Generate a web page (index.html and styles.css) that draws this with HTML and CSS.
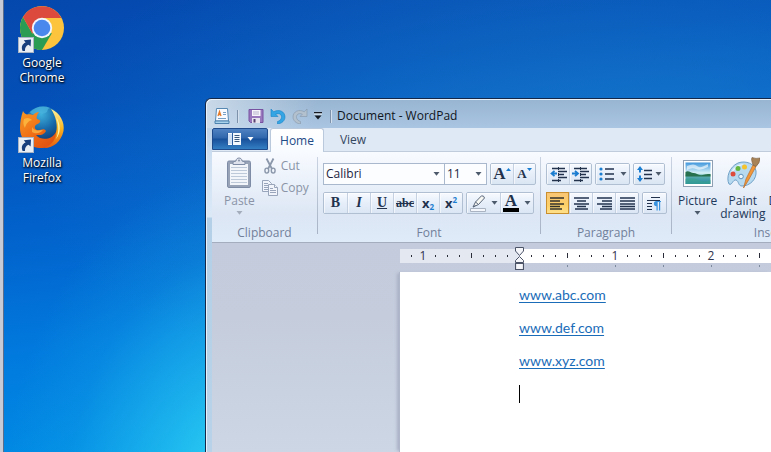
FILE: index.html
```html
<!DOCTYPE html>
<html lang="en">
<head>
<meta charset="utf-8">
<title>Document - WordPad</title>
<link rel="stylesheet" href="styles.css">
</head>
<body>
<svg class="defs" width="0" height="0" aria-hidden="true">
  <defs>
    <symbol id="shortcut" viewBox="0 0 16 16">
      <rect x=".5" y=".5" width="15" height="15" fill="#e9eef5" stroke="#a9b4c4"/>
      <path d="M4.600 14C3 10.500 4 7 7.600 5.600L5.800 3.300L13 2.400L12.600 9.600L10.600 7.700C8.200 8.500 6.700 10.500 7 14Z" fill="#173f7d"/>
    </symbol>
    <symbol id="caret" viewBox="0 0 7 4"><path d="M.5 0H6.500L3.500 3.800Z" fill="currentColor"/></symbol>
    <symbol id="ticks" viewBox="0 0 84 14">
      <path d="M6.500 6v2M18.500 6v2M30.500 6v2M42.500 4v5M54.500 6v2M66.500 6v2M78.500 6v2" stroke="#2a2c38"/>
    </symbol>
  </defs>
</svg>

<main class="desktop">
  <nav class="shortcuts" aria-label="Desktop">
    <a class="shortcut" href="#chrome">
      <svg class="shortcut-icon" viewBox="0 0 48 48" aria-hidden="true">
        <circle cx="24" cy="22" r="22" fill="#fcc43c"/>
        <path d="M24 22L14.300 27.600L4.950 11A22 22 0 0 0 20.200 43.700L33.700 27.600Z" fill="#2a9c54"/>
        <path d="M20.200 43.700A22 22 0 0 0 24 44L33.700 27.600L24 24Z" fill="#2a9c54"/>
        <path d="M4.950 11A22 22 0 0 1 43.400 12H24L14.300 27.600Z" fill="#db4a3d"/>
        <circle cx="24" cy="22" r="10.200" fill="#f3f6fb"/>
        <circle cx="24" cy="22" r="8.300" fill="#4a88ee"/>
        <use href="#shortcut" x="0" y="31" width="16" height="16"/>
      </svg>
      <span>Google<br>Chrome</span>
    </a>
    <a class="shortcut" href="#firefox">
      <svg class="shortcut-icon" viewBox="0 0 48 48" aria-hidden="true">
        <defs>
          <radialGradient id="globe" cx=".45" cy=".2" r=".8"><stop offset="0" stop-color="#3fb0dc"/><stop offset=".5" stop-color="#1768a9"/><stop offset="1" stop-color="#0e2d63"/></radialGradient>
          <linearGradient id="tail" x1="0" y1="0" x2="0" y2="1"><stop offset="0" stop-color="#fdf3a0"/><stop offset=".5" stop-color="#fbb51f"/><stop offset="1" stop-color="#e45a12"/></linearGradient>
          <linearGradient id="fox" x1="0" y1="0" x2="1" y2="1"><stop offset="0" stop-color="#f79a24"/><stop offset=".5" stop-color="#ee6a15"/><stop offset="1" stop-color="#d84410"/></linearGradient>
        </defs>
        <circle cx="25" cy="20" r="19.500" fill="url(#globe)"/>
        <path d="M12 6C17 1 25 -1 32 2C28 3 31 6 27 7C24 9 21 6 18 8C15 9 13 8 12 6Z" fill="#4bb5de" opacity=".7"/>
        <path d="M5 5C6 7 7 8 9 8.500C11 8 13 8 15 9C17 7 19 6 21 6C19 9 18 11 19 13C21 14 23 14 22 16C21 18 18 18 17 20C16 23 19 25 22 24C25 23 27 23 28 25C25 30 21 29 18 29C23 35 34 34 38 26C41 20 40 14 38 10C43 15 44 20 44 25C42 36 34 42 24 42C11 42 2 34 2 22C2 16 3 11 5 5Z" fill="url(#fox)"/>
        <path d="M33 3C42 7 47 16 45.500 25C43 36 35 42 26 42C34 39 38 33 38 27C40 20 38 10 33 3Z" fill="url(#tail)"/>
        <path d="M38 11C43 18 43 27 38 33C41 26 41 19 38 11Z" fill="#fff6a8"/>
        <path d="M6 13C9 11 12 12 14 14C10 15 8 18 7 22C5 19 5 16 6 13Z" fill="#fbb13c"/>
        <path d="M14 21C17 26 21 24 25 24C22 28 17 28 14 26Z" fill="#f9a63c"/>
        <use href="#shortcut" x="0" y="31" width="16" height="16"/>
      </svg>
      <span>Mozilla<br>Firefox</span>
    </a>
  </nav>

  <section class="window" aria-label="Document - WordPad">
    <header class="titlebar">
      <svg width="16" height="16" viewBox="0 0 16 16" aria-hidden="true">
        <path d="M2.500 .5h11l1 12.500h-13z" fill="#f8fbff" stroke="#5688b2"/>
        <path d="M1 13h14v2.500H1z" fill="#a9d2ec" stroke="#4d82ae"/>
        <path d="M4 8L5.500 3.500L7 8M4.500 6.500h2" fill="none" stroke="#e47b2a" stroke-width="1.300"/>
        <path d="M9 4.500h3M9 6.500h3M4 10.500h8" stroke="#78a0c4"/>
      </svg>
      <span class="title-sep"></span>
      <button class="tool" type="button" aria-label="Save">
        <svg width="16" height="16" viewBox="0 0 16 16">
          <path d="M1 1.500h14v13H2.500L1 13z" fill="#9a78bd" stroke="#7652a0"/>
          <path d="M4 2h8.500v6H4z" fill="#f7f5fb"/><path d="M5 4h6M5 6h6" stroke="#b9b1cc"/>
          <path d="M4 10h8v5H4z" fill="#e6e3ee"/><path d="M5.500 11h2v3.500h-2z" fill="#574273"/>
        </svg>
      </button>
      <button class="tool" type="button" aria-label="Undo">
        <svg width="16" height="16" viewBox="0 0 16 16">
          <path d="M1 1v7.500h7L5.700 6.200C9.500 4.500 12 7 11.500 9.500C11.300 11.500 9.500 13 7.500 13.500V16C12 15.500 15 12.500 15 9C15 3.500 9 .7 3.700 3.800Z" fill="#35a5e4" stroke="#1a83c7" stroke-width=".6"/>
        </svg>
      </button>
      <button class="tool" type="button" aria-label="Redo" disabled>
        <svg width="16" height="16" viewBox="0 0 16 16">
          <path d="M15 1v7.500H8L10.300 6.200C6.500 4.500 4 7 4.500 9.500C4.700 11.500 6.500 13 8.500 13.500V16C4 15.500 1 12.500 1 9C1 3.500 7 .7 12.300 3.800Z" fill="#b3c0cd" stroke="#8b9db0" stroke-width=".7"/>
        </svg>
      </button>
      <button class="tool tool-more" type="button" aria-label="Customize Quick Access Toolbar">
        <svg width="8" height="8" viewBox="0 0 8 8"><path d="M0 0h8v1.600H0zM.5 3.500h7L4 7.500z" fill="#151a22"/><path d="M0 2h8" stroke="#f4f8fc"/></svg>
      </button>
      <span class="title-sep"></span>
      <h1 class="title">Document - WordPad</h1>
    </header>

    <div class="client">
      <nav class="tabs" aria-label="Ribbon tabs">
        <button class="app-button" type="button" aria-label="WordPad menu">
          <svg width="14" height="12" viewBox="0 0 14 12"><path d="M0 0h14v12H0z" fill="#f3f8ff"/><path d="M0 0h1v12H0zM5 0h1v12H5z" fill="#2a5c9f"/><path d="M1 1h4v10H1z" fill="#cfe0f5"/><path d="M7.500 2.500h5M7.500 4.500h5M7.500 6.500h5M7.500 8.500h5" stroke="#39597f"/></svg>
          <svg class="caret" width="7" height="4"><use href="#caret"/></svg>
        </button>
        <button class="tab tab-active" type="button">Home</button>
        <button class="tab" type="button">View</button>
      </nav>

      <div class="ribbon">
        <section class="group group-clipboard">
          <div class="group-body">
            <button class="big-button" type="button" disabled>
              <svg width="26" height="32" viewBox="0 0 26 32">
                <rect x="1.500" y="4" width="23" height="26.500" rx="1.500" fill="#98a3b8" stroke="#7f8ca5"/>
                <path d="M4 7h18v21H4z" fill="#f2f5fa"/>
                <path d="M5 10.500h16M5 13.500h16M5 16.500h16M5 19.500h16M5 22.500h16M5 25.500h16" stroke="#bdc8d9"/>
                <path d="M7 7.500V5l3-1c0-4 6-4 6 0l3 1v2.500z" fill="#dde2ec" stroke="#7f8ca5"/>
                <circle cx="13" cy="3.500" r="1" fill="#8591a8"/>
              </svg>
              <span>Paste</span>
              <svg class="caret" width="7" height="4"><use href="#caret"/></svg>
            </button>
            <div class="stack">
              <button class="small-button" type="button" disabled>
                <svg width="16" height="16" viewBox="0 0 16 16" fill="none" stroke="#8b97ab">
                  <path d="M4.500 .5L10 11M11.500 .5L6 11" stroke-width="1.800"/>
                  <ellipse cx="4.800" cy="12.600" rx="1.900" ry="2.500" stroke-width="1.400"/><ellipse cx="11.200" cy="12.600" rx="1.900" ry="2.500" stroke-width="1.400"/>
                </svg>
                <span>Cut</span>
              </button>
              <button class="small-button" type="button" disabled>
                <svg width="16" height="16" viewBox="0 0 16 16" fill="#f1f5fb" stroke="#98a5ba">
                  <path d="M.5 .5h6l3 3v8h-9z"/><path d="M2 3.500h4M2 5.500h5M2 7.500h5M2 9.500h5"/>
                  <path d="M6.500 4.500h6l3 3v8h-9z"/><path d="M12.500 4.500v3h3M8 8.500h3M8 10.500h6M8 12.500h6"/>
                </svg>
                <span>Copy</span>
              </button>
            </div>
          </div>
          <h2 class="group-label">Clipboard</h2>
        </section>
        <span class="group-sep"></span>

        <section class="group group-font">
          <div class="group-body rows">
            <div class="row">
              <div class="combos">
                <label class="combo combo-family"><select aria-label="Font family"><option>Calibri</option></select><svg class="caret" width="7" height="4"><use href="#caret"/></svg></label>
                <label class="combo combo-size"><select aria-label="Font size"><option>11</option></select><svg class="caret" width="7" height="4"><use href="#caret"/></svg></label>
              </div>
              <div class="buttons pair">
                <button type="button" aria-label="Grow font"><span class="glyph glyph-grow">A</span><svg class="mark" width="5" height="3" viewBox="0 0 5 3"><path d="M0 3L2.500 0L5 3z" fill="#1b7dd0"/></svg></button>
                <button type="button" aria-label="Shrink font"><span class="glyph glyph-shrink">A</span><svg class="mark" width="5" height="3" viewBox="0 0 5 3"><path d="M0 0h5L2.500 3z" fill="#1b7dd0"/></svg></button>
              </div>
            </div>
            <div class="row">
              <div class="buttons">
                <button type="button" aria-label="Bold"><b class="glyph">B</b></button>
                <button type="button" aria-label="Italic"><i class="glyph glyph-italic">I</i></button>
                <button type="button" aria-label="Underline"><u class="glyph">U</u></button>
                <button type="button" aria-label="Strikethrough"><s class="glyph glyph-strike">abc</s></button>
                <button type="button" aria-label="Subscript"><span class="glyph glyph-script">x<sub>2</sub></span></button>
                <button type="button" aria-label="Superscript"><span class="glyph glyph-script">x<sup>2</sup></span></button>
              </div>
              <div class="buttons wide">
                <button type="button" aria-label="Text highlight color">
                  <svg width="16" height="17" viewBox="0 0 16 17"><path d="M3 12L5.500 7L11.500 .8Q14 .5 14.500 3L8.500 9.500Z" fill="#f8f8f4" stroke="#596678"/><path d="M5.500 7L8.500 9.500M3 12l2.500-1.500" stroke="#596678"/><path d="M.5 13.500h15v3H.5z" fill="#f4f7fb" stroke="#a9b3c1"/></svg>
                  <svg class="caret" width="7" height="4"><use href="#caret"/></svg>
                </button>
                <button type="button" aria-label="Text color">
                  <span class="color-glyph">A</span>
                  <svg class="caret" width="7" height="4"><use href="#caret"/></svg>
                </button>
              </div>
            </div>
          </div>
          <h2 class="group-label">Font</h2>
        </section>
        <span class="group-sep"></span>

        <section class="group group-paragraph">
          <div class="group-body rows">
            <div class="row">
              <div class="buttons pair">
                <button type="button" aria-label="Decrease indent"><svg width="17" height="15" viewBox="0 0 17 15"><path d="M2 1.500h13M8 4.500h9M8 7.500h6M8 10.500h9M2 13.500h9" stroke="#22324d" stroke-width="1.400"/><path d="M7 6.500H2.500M4.500 3.800L1.500 6.500L4.500 9.200" fill="none" stroke="#1b7dd0" stroke-width="1.800"/><path d="M8.500 0v15" stroke="#22324d" stroke-dasharray="1 1"/></svg></button>
                <button type="button" aria-label="Increase indent"><svg width="17" height="15" viewBox="0 0 17 15"><path d="M2 1.500h13M8 4.500h9M8 7.500h6M8 10.500h9M2 13.500h9" stroke="#22324d" stroke-width="1.400"/><path d="M0 6.500H5M3 3.800L6 6.500L3 9.200" fill="none" stroke="#1b7dd0" stroke-width="1.800"/><path d="M8.500 0v15" stroke="#22324d" stroke-dasharray="1 1"/></svg></button>
              </div>
              <div class="buttons drop">
                <button type="button" aria-label="Start a list"><svg width="16" height="14" viewBox="0 0 16 14"><path d="M6 2h9M6 7h9M6 12h9" stroke="#22324d" stroke-width="1.300"/><g fill="#1b7dd0"><circle cx="2" cy="2" r="1.600"/><circle cx="2" cy="7" r="1.600"/><circle cx="2" cy="12" r="1.600"/></g></svg><svg class="caret" width="7" height="4"><use href="#caret"/></svg></button>
              </div>
              <div class="buttons drop-narrow">
                <button type="button" aria-label="Line spacing"><svg width="15" height="16" viewBox="0 0 15 16"><path d="M7 4.500h8M7 8.500h8M7 12.500h8" stroke="#22324d" stroke-width="1.300"/><path d="M3 0L6 4H4v2.500H2V4H0zM3 16L6 12H4V9.500H2V12H0z" fill="#1b7dd0"/></svg><svg class="caret" width="7" height="4"><use href="#caret"/></svg></button>
              </div>
            </div>
            <div class="row">
              <div class="buttons">
                <button class="pressed" type="button" aria-label="Align left"><svg width="15" height="13" viewBox="0 0 15 13"><path d="M0 1h14M0 4h10M0 7h14M0 9.500h10M0 12h12" stroke="#33322c" stroke-width="1.300"/></svg></button>
                <button type="button" aria-label="Center"><svg width="15" height="13" viewBox="0 0 15 13"><path d="M0 1h15M3 4h9M0 7h15M3 9.500h9M1 12h13" stroke="#22324d" stroke-width="1.300"/></svg></button>
                <button type="button" aria-label="Align right"><svg width="15" height="13" viewBox="0 0 15 13"><path d="M0 1h15M5 4h10M0 7h15M5 9.500h10M3 12h12" stroke="#22324d" stroke-width="1.300"/></svg></button>
                <button type="button" aria-label="Justify"><svg width="15" height="13" viewBox="0 0 15 13"><path d="M0 1h15M0 4h15M0 7h15M0 9.500h15M0 12h15" stroke="#22324d" stroke-width="1.300"/></svg></button>
              </div>
              <div class="buttons">
                <button type="button" aria-label="Paragraph"><svg width="15" height="15" viewBox="0 0 15 15"><path d="M4 1.500h9M0 4.500h13M0 7.500h5M0 10.500h5M0 13.500h5" stroke="#22324d" stroke-width="1.200"/><path d="M14 5H9.500a2.600 2.600 0 0 0 0 5.200V14.500h1.200V6h1.300v8.500h1.200V6H14z" fill="#3993df"/></svg></button>
              </div>
            </div>
          </div>
          <h2 class="group-label">Paragraph</h2>
        </section>
        <span class="group-sep"></span>

        <section class="group group-insert">
          <div class="group-body">
            <button class="big-button" type="button">
              <svg width="30" height="32" viewBox="0 0 30 32">
                <defs>
                  <linearGradient id="sky" x1="0" y1="0" x2="0" y2="1"><stop offset="0" stop-color="#3f96dc"/><stop offset=".5" stop-color="#d8f2f7"/><stop offset=".6" stop-color="#5fb0ac"/><stop offset="1" stop-color="#2586a8"/></linearGradient>
                </defs>
                <rect x=".5" y="3.500" width="29" height="26" fill="#fff" stroke="#8fa0b5"/>
                <path d="M2.500 5.500h25v21.500h-25z" fill="url(#sky)"/>
                <path d="M4 9q7-3 10 0t11-2v3q-8 4-12 2T4 13z" fill="#fff" opacity=".6"/>
                <path d="M2.500 15c3-2 5 1 8 1s5 3 9 2s5-1 8-1v2.500h-25z" fill="#28714e"/>
                <path d="M2.500 22q8-2 13 1t12 0v4h-25z" fill="#3aa58b" opacity=".6"/>
              </svg>
              <span>Picture</span>
              <svg class="caret" width="7" height="4"><use href="#caret"/></svg>
            </button>
            <button class="big-button" type="button">
              <svg width="34" height="32" viewBox="0 0 34 32">
                <path d="M3 27C0 21 3 10 12 6C20 3 29 7 30 14C31 22 24 29 16 29C12 29 13 24 10 23C7 22 6 29 3 27Z" fill="#b7daf1" stroke="#6f9fc5"/>
                <path d="M4 20C5 11 11 7 18 7C12 10 7 13 4 20Z" fill="#e5f4fd"/>
                <circle cx="7" cy="17" r="2.500" fill="#dd4b3b"/><circle cx="12" cy="11.500" r="2.500" fill="#65b63f"/><circle cx="18.500" cy="10" r="2.500" fill="#f4c32c"/><circle cx="15" cy="19.500" r="2.300" fill="#eff8fd" stroke="#6192bd"/>
                <path d="M17.500 31L20 22L27 8L30 9.500L22 24Z" fill="#f2983a" stroke="#b66b29" stroke-width=".7"/>
                <path d="M27 8C26 5 25 2 26 .5Q30 2 34 1Q34 6 30 9.500Z" fill="#a98358" stroke="#76593c" stroke-width=".6"/>
              </svg>
              <span>Paint<br>drawing</span>
            </button>
            <button class="big-button" type="button">
              <svg width="32" height="32" viewBox="0 0 32 32"><path d="M4.500 5.500h23v22h-23z" fill="#fff" stroke="#8fa0b5"/><path d="M5 6h22v5H5z" fill="#4c8fd0"/></svg>
              <span>Date and<br>time</span>
            </button>
          </div>
          <h2 class="group-label">Insert</h2>
        </section>
      </div>

      <div class="workspace">
        <div class="ruler" aria-hidden="true">
          <div class="ruler-margin">
            <svg width="12" height="14" viewBox="0 0 12 14"><path d="M6.500 6v2" stroke="#2a2c38"/></svg>
            <span class="ruler-number">1</span>
            <svg width="84" height="14"><use href="#ticks"/></svg>
            <svg class="indent" width="9" height="23" viewBox="0 0 9 23" fill="#f5f7fb" stroke="#4c5468">
              <path d="M.5 .5h8v3.500L4.500 8.500L.5 4z"/><path d="M4.500 9.500L8.500 13.500V15.500h-8V13.500z"/><path d="M.5 16.500h8v6h-8z" stroke-width="1.200"/>
            </svg>
          </div>
          <div class="ruler-page">
            <svg width="84" height="14"><use href="#ticks"/></svg>
            <span class="ruler-number">1</span>
            <svg width="84" height="14"><use href="#ticks"/></svg>
            <span class="ruler-number">2</span>
            <svg width="84" height="14"><use href="#ticks"/></svg>
          </div>
        </div>
        <article class="page">
          <p><a href="#abc">www.abc.com</a></p>
          <p><a href="#def">www.def.com</a></p>
          <p><a href="#xyz">www.xyz.com</a></p>
          <p><span class="text-cursor"></span></p>
        </article>
      </div>
    </div>
  </section>
</main>
</body>
</html>
```
FILE: styles.css
```css
* { box-sizing: border-box; }

body {
  margin: 0;
  font: 12px/16px "Open Sans", "Noto Sans", sans-serif;
  color: #1e395b;
}

svg { display: block; flex: none; }
.defs { position: absolute; }

button {
  margin: 0;
  padding: 0;
  border: 0;
  background: none;
  font: inherit;
  color: inherit;
}

h1, h2, p { margin: 0; font: inherit; }

.caret { color: #4d5a6c; }

/* Desktop */
.desktop {
  position: relative;
  height: 100vh;
  overflow: hidden;
  border-left: 3px solid #c6c9d6;
  background:
    radial-gradient(ellipse 260px 340px at 260px 500px, rgba(60, 230, 248, .95) 0%, rgba(50, 215, 245, .55) 40%, rgba(30, 180, 235, .2) 75%, rgba(0, 140, 230, 0) 100%),
    radial-gradient(ellipse 600px 260px at 620px 160px, rgba(30, 130, 205, .7), rgba(20, 110, 200, 0)),
    linear-gradient(172deg, #0548ad 0%, #0350b8 20%, #0262cc 42%, #017ade 64%, #0099ea 100%);
  box-shadow: inset 1px 0 #5c6d8c;
}

.shortcuts {
  display: flex;
  flex-direction: column;
  align-items: flex-start;
  gap: 21px;
  padding: 6px 0 0 1px;
}

.shortcut {
  display: flex;
  flex-direction: column;
  align-items: center;
  width: 76px;
  line-height: 15px;
  text-align: center;
  text-decoration: none;
  color: #fff;
  text-shadow: 1px 1px 2px #000, 0 1px 2px #001a40;
}

.shortcut-icon { width: 48px; height: 48px; margin-bottom: 1px; }

/* Window frame */
.window {
  position: absolute;
  inset: 98px 0 0 202px;
  display: flex;
  flex-direction: column;
  padding: 1px 0 0 6px;
  overflow: hidden;
  border: solid #14284a;
  border-width: 1px 0 0 1px;
  border-radius: 6px 0 0 0;
  background:
    linear-gradient(100deg, rgba(222, 232, 242, .7) 0, rgba(222, 232, 242, 0) 110px) 0 0 / 100% 29px no-repeat,
    linear-gradient(#97b4d0, #a9c5e2) 0 0 / 100% 29px no-repeat,
    linear-gradient(#a9c5e2 0, #cfe0f2 60px, #dbe9f7 118px, #b3d0e8 119px, #b8d3e9 100%);
  box-shadow: inset 1px 1px #e9f2fa;
}

.titlebar {
  display: flex;
  align-items: center;
  height: 28px;
  padding: 4px 0 0 2px;
}

.titlebar .title-sep { margin: 0 9px 0 7px; }

.title-sep {
  width: 2px;
  height: 13px;
  border-left: 1px solid #7e93ab;
  background: #d4e0ed;
}

.tool { margin-right: 6px; }
.titlebar .tool-more { margin-right: 1px; }
.title-sep + .title { margin-left: -4px; }
.title { color: #10151d; }

.client {
  display: flex;
  flex: 1;
  flex-direction: column;
  min-height: 0;
}

/* Tabs */
.tabs {
  display: flex;
  flex: none;
  gap: 2px;
  height: 24px;
  background: #dfe8f5;
  border-bottom: 1px solid #c0cbdc;
}

.app-button {
  display: flex;
  align-items: center;
  justify-content: center;
  gap: 6px;
  width: 56px;
  height: 22px;
  border: 1px solid #1f4b8c;
  border-radius: 2px 2px 0 0;
  background: linear-gradient(#4f82c2, #2f66ac 45%, #18509a 50%, #337fc4);
}
.app-button .caret { color: #fff; }

.tab {
  width: 54px;
  height: 24px;
  color: #33475f;
}

.tab-active {
  border: 1px solid #bac9db;
  border-bottom: 0;
  border-radius: 3px 3px 0 0;
  background: linear-gradient(#fff, #f8fbff);
  color: #1e4a86;
}

/* Ribbon */
.ribbon {
  display: flex;
  flex: none;
  padding-top: 5px;
  border-bottom: 1px solid #a3adbe;
  background: linear-gradient(#f8fbff, #e8eff9 40%, #dce6f4 70%, #dfebf9);
}

.group {
  display: flex;
  flex: none;
  flex-direction: column;
}
.group-clipboard { width: 105px; }
.group-font { width: 222px; }
.group-paragraph { width: 130px; }
.group-insert { width: 196px; }

.group-sep {
  flex: none;
  width: 1px;
  height: 77px;
  background: linear-gradient(#c9d3e1, #a8b4c6);
}

.group-body { display: flex; height: 68px; }
.group-label { text-align: center; color: #71809a; height: 17px; }

.big-button {
  display: flex;
  flex: none;
  flex-direction: column;
  align-items: center;
  line-height: 13px;
}
.big-button > span { margin-top: 5px; }
.big-button .caret { margin-top: 4px; }
.big-button:disabled,
.small-button:disabled { color: #8a94a6; }
.big-button:disabled .caret { color: #a4adbc; }

.group-clipboard .group-body { gap: 7px; padding-left: 12px; }
.stack {
  display: flex;
  flex-direction: column;
  align-items: flex-start;
  gap: 6px;
  padding-top: 1px;
}
.small-button { display: flex; align-items: center; gap: 3px; }

.group-insert .group-body { gap: 3px; padding-left: 6px; }

.rows {
  flex-direction: column;
  gap: 7px;
  padding: 6px 0 0 5px;
}
.row { display: flex; gap: 3px; }

.combos { display: flex; }
.combo {
  display: grid;
  grid-template-columns: 1fr 7px 4px;
  align-items: center;
  height: 22px;
  border: 1px solid #a9b8cc;
  background: #fbfdff;
}
.combo + .combo { border-left: 0; }
.combo-family { width: 122px; }
.combo-size { width: 42px; }
.combo select {
  grid-area: 1 / 1 / 2 / 4;
  width: 100%;
  padding: 0 0 0 2px;
  border: 0;
  appearance: none;
  background: none;
  font: inherit;
  color: #1d2340;
}
.combo .caret { grid-area: 1 / 2; pointer-events: none; }

.buttons {
  display: flex;
  height: 22px;
  border: 1px solid #b0bfd2;
  border-radius: 2px;
  background: linear-gradient(#f7faff, #e6eef9 50%, #dbe6f4);
}
.buttons button {
  display: flex;
  align-items: center;
  justify-content: center;
  gap: 5px;
  width: 23px;
  box-shadow: inset 1px 1px rgba(255, 255, 255, .6);
}
.buttons button + button { border-left: 1px solid #c5d1e0; }
.pair button { width: 22px; }
.wide button { width: 33px; }
.drop button { width: 33px; }
.drop-narrow button { width: 30px; gap: 3px; }
.buttons .pressed {
  border: 1px solid #c98e2e;
  margin: -1px 0 -1px -1px;
  background: linear-gradient(#f9c574, #fdd068 60%, #fee08a);
  box-shadow: none;
}

.glyph {
  font: 14px/16px "Liberation Serif", serif;
  font-weight: 700;
  color: #22324d;
}
.glyph-italic { font-style: italic; }
.glyph-grow { font-size: 17px; }
.glyph-shrink { font-size: 13px; }
.buttons button:has(.mark) { gap: 0; }
.mark { align-self: flex-start; margin-top: 4px; }
.glyph-strike { font-size: 12px; }
.glyph-script { font: 700 13px/16px "Open Sans", sans-serif; }
.glyph-script sub,
.glyph-script sup { font-size: 8px; line-height: 0; color: #1b7dd0; }
.glyph-script sub { vertical-align: -2px; }

.color-glyph {
  width: 16px;
  height: 18px;
  border-bottom: 4px solid #000;
  font: 700 17px/13px "Liberation Serif", serif;
  color: #22324d;
}

/* Document area */
.workspace {
  flex: 1;
  display: flex;
  flex-direction: column;
  padding: 6px 0 0 188px;
  background: linear-gradient(#c3cbdc, #c5cddd 35%, #ccd6e4);
}

.ruler {
  display: flex;
  flex: none;
  height: 23px;
  background: repeating-linear-gradient(90deg, transparent 0 47px, #7e899d 47px 48px) 120px 16px / 100% 2px no-repeat;
}
.ruler-margin,
.ruler-page { display: flex; height: 14px; }
.ruler-margin {
  position: relative;
  flex: none;
  width: 119px;
  padding-left: 5px;
  background: #e4e9f1;
}
.ruler-page { flex: 1; padding-left: 6px; background: #fff; overflow: hidden; }
.ruler-number {
  flex: none;
  width: 12px;
  line-height: 14px;
  text-align: center;
  color: #30354d;
}
.indent { position: absolute; right: -5px; top: -2px; }

.page {
  flex: 1;
  padding: 6px 0 0 119px;
  border-left: 1px solid #aeb6c9;
  margin-left: -1px;
  background: #fff;
  box-shadow: -3px 0 3px -1px #a9b1c6;
  font: 14px/33px Lato, "Open Sans", sans-serif;
}
.page a { color: #1a6cb8; text-underline-offset: 2px; }
.page p { height: 33px; }

.text-cursor {
  display: block;
  width: 1px;
  height: 18px;
  background: #000;
}
.page p:last-child { padding-top: 8px; }
```
